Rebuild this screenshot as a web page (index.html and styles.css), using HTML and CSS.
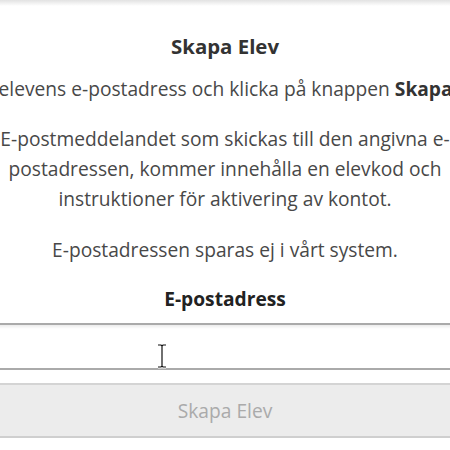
FILE: index.html
```html
<!DOCTYPE html>
<html lang="sv">
<head>
  <meta charset="UTF-8" />
  <meta name="viewport" content="width=device-width, initial-scale=1.0"/>
  <title>Skapa Elev</title>
  <link rel="stylesheet" href="styles.css">
</head>
<body>

  <div class="top-shadow"></div>

  <div class="dialog">
    <h2>Skapa Elev</h2>
    <p class="intro"><span>Ange elevens e-postadress och klicka på knappen <strong>Skapa Elev</strong>.</span></p>

    <p>E-postmeddelandet som skickas till den angivna e-postadressen, kommer innehålla en elevkod och instruktioner för aktivering av kontot.</p>

    <p>E-postadressen sparas ej i vårt system.</p>

    <label for="student-email">E-postadress</label>
    <div class="field">
      <input type="email" id="student-email" />
      <svg class="cursor" width="12" height="26" viewBox="0 0 12 26">
        <path d="M2 2h3l1 1 1-1h3M6 3v20M2 24h3l1-1 1 1h3" fill="none" stroke="#fff" stroke-width="3"/>
        <path d="M2 2h3l1 1 1-1h3M6 3v20M2 24h3l1-1 1 1h3" fill="none" stroke="#111" stroke-width="1.2"/>
      </svg>
    </div>

    <button disabled>Skapa Elev</button>
  </div>

</body>
</html>
```

FILE: styles.css
```css
body {
  margin: 0;
  overflow: hidden;
  background: #fff;
  font-family: "Open Sans", Arial, sans-serif;
  color: #484848;
}

.top-shadow {
  height: 6px;
  background: linear-gradient(#e2e2e2, #fff);
}

.dialog {
  margin: 0 -20px;
  text-align: center;
}

h2 {
  margin: 25px 0 0;
  font-size: 20.4px;
  font-weight: 700;
  color: #333;
  line-height: 30px;
}

p {
  margin: 0 0 21px;
  font-size: 19.2px;
  line-height: 30px;
}

.intro {
  display: flex;
  justify-content: center;
  white-space: nowrap;
  margin-top: 13px;
  margin-bottom: 20px;
}

.intro strong {
  color: #333;
}

label {
  display: block;
  font-weight: bold;
  font-size: 19.2px;
  line-height: 30px;
  color: #222;
  margin-top: -2px;
}

.field {
  position: relative;
  margin-top: 9px;
}

input {
  display: block;
  width: 100%;
  box-sizing: border-box;
  height: 47px;
  border: none;
  border-top: 2px solid #aaa;
  border-bottom: 2px solid #aaa;
  box-shadow: inset 0 2px 3px rgba(0,0,0,0.08);
  background: #fff;
  outline: none;
}

.cursor {
  position: absolute;
  left: 176px;
  top: 20px;
}

button {
  display: block;
  width: 100%;
  height: 55px;
  margin-top: 13px;
  background: #ececec;
  border: none;
  border-top: 2px solid #d4d4d4;
  border-bottom: 2px solid #cfcfcf;
  box-shadow: 0 3px 4px rgba(0,0,0,0.05);
  font-family: "Open Sans", Arial, sans-serif;
  font-size: 19.2px;
  color: #aaa;
}
```
